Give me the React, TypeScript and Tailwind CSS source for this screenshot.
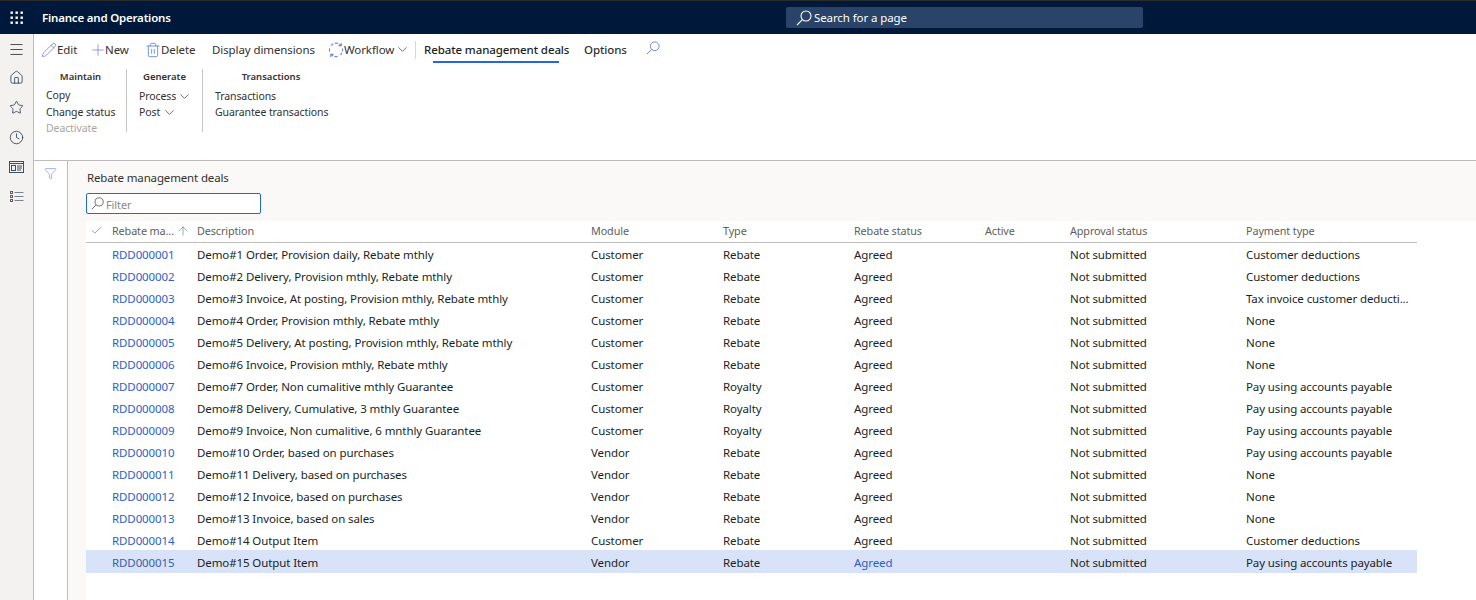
import React from "react";
import { Pencil, Plus, Trash2, ChevronDown, House, Star, Clock, Funnel, Menu, ArrowUp, Check } from "lucide-react";

const rows = [
  ["RDD000001", "Demo#1 Order, Provision daily, Rebate mthly", "Customer", "Rebate", "Customer deductions"],
  ["RDD000002", "Demo#2 Delivery, Provision mthly, Rebate mthly", "Customer", "Rebate", "Customer deductions"],
  ["RDD000003", "Demo#3 Invoice, At posting, Provision mthly, Rebate mthly", "Customer", "Rebate", "Tax invoice customer deducti..."],
  ["RDD000004", "Demo#4 Order, Provision mthly, Rebate mthly", "Customer", "Rebate", "None"],
  ["RDD000005", "Demo#5 Delivery, At posting, Provision mthly, Rebate mthly", "Customer", "Rebate", "None"],
  ["RDD000006", "Demo#6 Invoice, Provision mthly, Rebate mthly", "Customer", "Rebate", "None"],
  ["RDD000007", "Demo#7 Order, Non cumalitive mthly Guarantee", "Customer", "Royalty", "Pay using accounts payable"],
  ["RDD000008", "Demo#8 Delivery, Cumulative, 3 mthly Guarantee", "Customer", "Royalty", "Pay using accounts payable"],
  ["RDD000009", "Demo#9 Invoice, Non cumalitive, 6 mnthly Guarantee", "Customer", "Royalty", "Pay using accounts payable"],
  ["RDD000010", "Demo#10 Order, based on purchases", "Vendor", "Rebate", "Pay using accounts payable"],
  ["RDD000011", "Demo#11 Delivery, based on purchases", "Vendor", "Rebate", "None"],
  ["RDD000012", "Demo#12 Invoice, based on purchases", "Vendor", "Rebate", "None"],
  ["RDD000013", "Demo#13 Invoice, based on sales", "Vendor", "Rebate", "None"],
  ["RDD000014", "Demo#14 Output Item", "Customer", "Rebate", "Customer deductions"],
  ["RDD000015", "Demo#15 Output Item", "Vendor", "Rebate", "Pay using accounts payable"],
];

const cols = "grid grid-cols-[26px_85px_394px_132px_131px_131px_85px_176px_171px] w-[1331px]";

function Waffle() {
  return (
    <svg width="14" height="14" viewBox="0 0 14 14" fill="#fff">
      {[1, 6, 11].flatMap((y) => [1, 6, 11].map((x) => <rect key={`${x}-${y}`} x={x - 0.5} y={y - 0.5} width="2.4" height="2.4" />))}
    </svg>
  );
}

function Loupe({ size, color }: { size: number; color: string }) {
  return (
    <svg width={size} height={size} viewBox="0 0 16 16" fill="none" stroke={color} strokeWidth="1.1">
      <circle cx="10" cy="6" r="5" />
      <path d="M6.4 9.6L1 15" />
    </svg>
  );
}

function Workspace() {
  return (
    <svg width="15" height="12" viewBox="0 0 15 12" fill="none" stroke="#3f4f63" strokeWidth="1">
      <rect x="0.5" y="0.5" width="14" height="11" />
      <path d="M0.5 2.5H14.5" />
      <rect x="2.5" y="4.5" width="4" height="5" />
      <path d="M8 5H13M8 7H13M8 9H12" />
    </svg>
  );
}

function ListIcon() {
  return (
    <svg width="14" height="12" viewBox="0 0 14 12" fill="none" stroke="#6b5a5f" strokeWidth="1">
      <rect x="0.5" y="0.5" width="2" height="2" />
      <rect x="0.5" y="4.5" width="2" height="2" />
      <rect x="0.5" y="8.5" width="2" height="2" />
      <path d="M4.5 1.5H13.5M4.5 5.5H13.5M4.5 9.5H13.5" stroke="#7b838e" />
    </svg>
  );
}

function WorkflowIcon() {
  return (
    <svg width="16" height="16" viewBox="0 0 16 16" fill="none" stroke="#6f7fe0" strokeWidth="1.1">
      <path d="M3 3.5A6.5 6.5 0 0 1 13 3.5M14.4 6.5A6.5 6.5 0 0 1 12.5 12.8M9.5 14.4A6.5 6.5 0 0 1 3 12.5M1.6 9.5A6.5 6.5 0 0 1 1.8 6" strokeDasharray="3 1.4" />
      <path d="M10.5 3.6H13.2V1" />
      <path d="M5.5 12.4H2.8V15" />
    </svg>
  );
}

export default function App() {
  return (
    <div className="h-[600px] w-[1476px] overflow-hidden bg-white flex flex-col text-[11.5px] tracking-[-0.1px] leading-[16px] text-[#201f1e] font-['Noto_Sans',sans-serif]">
      <header className="h-[34px] shrink-0 bg-[#00183a] border-t border-[#2b2b2b] flex items-center relative">
        <div className="w-[33px] flex justify-center"><Waffle /></div>
        <span className="ml-[9px] text-white font-semibold tracking-[-0.2px]">Finance and Operations</span>
        <div className="absolute left-[786px] top-[6px] w-[357px] h-[21px] bg-[#2a4368] rounded-[2px] flex items-center pl-[10px] gap-[2px] text-white">
          <Loupe size={16} color="#ffffff" />
          <span className="pt-px">Search for a page</span>
        </div>
      </header>
      <div className="flex flex-1 min-h-0">
        <nav className="w-[34px] shrink-0 bg-[#f3f2f1] border-r border-[#bdbdbd] flex flex-col items-center pt-[2px] text-[#1f2d40]">
          <div className="h-[26px] flex items-center"><Menu size={17} strokeWidth={1.1} className="text-[#201f1e]" /></div>
          <div className="h-[30px] flex items-center"><House size={15} strokeWidth={1.2} /></div>
          <div className="h-[30px] flex items-center"><Star size={15} strokeWidth={1.2} /></div>
          <div className="h-[30px] flex items-center"><Clock size={15} strokeWidth={1.2} /></div>
          <div className="h-[30px] flex items-center"><Workspace /></div>
          <div className="h-[30px] flex items-center"><ListIcon /></div>
        </nav>
        <div className="flex-1 min-w-0 flex flex-col">
          <div className="h-[127px] shrink-0 border-b border-[#bdbdbd] bg-white">
            <div className="h-[31px] flex items-center pl-[7px] text-[#323130]">
              <div className="flex items-center w-[49px]"><Pencil size={16} strokeWidth={1.2} className="text-[#6f7fe0]" /><span>Edit</span></div>
              <div className="flex items-center w-[55px]"><Plus size={18} strokeWidth={1} className="text-[#6f7fe0] -ml-[1px] -mr-[2px]" /><span>New</span></div>
              <div className="flex items-center w-[67px]"><Trash2 size={16} strokeWidth={1.2} className="text-[#4a7fd0]" /><span>Delete</span></div>
              <span className="w-[116px]">Display dimensions</span>
              <div className="flex items-center w-[87px]"><WorkflowIcon /><span>Workflow</span><ChevronDown size={15} strokeWidth={1.1} className="ml-[1px]" /></div>
              <div className="w-px h-[18px] bg-[#d6d6d6]" />
              <div className="relative ml-[8px] w-[160px] font-medium text-[#201f1e]">
                Rebate management deals
                <div className="absolute left-[9px] top-[19px] w-[126px] h-[2px] bg-[#2266e3]" />
              </div>
              <span className="font-medium w-[62px]">Options</span>
              <div className="-mt-[4px]"><Loupe size={14} color="#6f7fe0" /></div>
            </div>
            <div className="flex pt-[4px] text-[#323130] text-[10.5px]">
              <div className="w-[92px] pl-[12px] h-[64px]">
                <div className="font-semibold text-[9.5px] tracking-normal text-center pr-[11px] pt-px h-[18px] leading-[14px]">Maintain</div>
                <div className="h-[17px]">Copy</div>
                <div className="h-[16px]">Change status</div>
                <div className="h-[16px] text-[#a6a6a6]">Deactivate</div>
              </div>
              <div className="w-px h-[63px] bg-[#c8c6c4]" />
              <div className="w-[75px] pl-[12px]">
                <div className="font-semibold text-[9.5px] tracking-normal text-center pr-[12px] pt-px h-[19px] leading-[14px]">Generate</div>
                <div className="h-[16px] flex items-center">Process<ChevronDown size={15} strokeWidth={1.1} className="ml-[1px]" /></div>
                <div className="h-[16px] flex items-center">Post<ChevronDown size={15} strokeWidth={1.1} className="ml-[2px]" /></div>
              </div>
              <div className="w-px h-[63px] bg-[#c8c6c4]" />
              <div className="pl-[12px]">
                <div className="font-semibold text-[9.5px] tracking-normal text-center pt-px h-[19px] w-[112px] leading-[14px]">Transactions</div>
                <div className="h-[16px]">Transactions</div>
                <div className="h-[16px]">Guarantee transactions</div>
              </div>
            </div>
          </div>
          <div className="flex-1 min-h-0 flex">
            <div className="w-[34px] shrink-0 border-r border-[#bdbdbd] flex justify-center pt-[6px]">
              <Funnel size={13} strokeWidth={1.1} className="text-[#6f7fe0]" />
            </div>
            <div className="flex-1 min-w-0 bg-[#faf9f8] pl-[18px] flex flex-col">
              <div className="h-[60px] shrink-0 pt-[9px]">
                <div className="h-[16px] pl-px text-[#323130] tracking-[-0.15px]">Rebate management deals</div>
                <div className="mt-[7px] w-[175px] h-[21px] bg-white border border-[#2266e3] rounded-[2px] flex items-center pl-[4px] text-[#8a8886] text-[11px]">
                  <Loupe size={13} color="#605e5c" />
                  <span className="ml-[2px] pt-[2px]">Filter</span>
                </div>
              </div>
              <div className="flex-1 bg-white">
                <div className={`${cols} h-[22px] pb-[2px] border-b border-[#bdbdbd] items-center whitespace-nowrap text-[#605e5c] text-[10.8px]`}>
                  <div className="pl-[4px]"><Check size={13} strokeWidth={1.1} /></div>
                  <div className="flex items-center">Rebate ma...<ArrowUp size={14} strokeWidth={1} className="ml-[2px] text-[#4f6f8f]" /></div>
                  <div>Description</div>
                  <div>Module</div>
                  <div>Type</div>
                  <div>Rebate status</div>
                  <div>Active</div>
                  <div>Approval status</div>
                  <div>Payment type</div>
                </div>
                {rows.map((r, i) => {
                  const sel = i === rows.length - 1;
                  return (
                    <div key={r[0]} className={`${cols} items-center ${sel ? "h-[23px] -mt-px pt-[3px] bg-[#d8e3fa]" : "h-[22px] pt-[2px]"} whitespace-nowrap`}>
                      <div />
                      <div className={sel ? "text-[#3b5fa8]" : "text-[#2b5fc9]"}>{r[0]}</div>
                      <div>{r[1]}</div>
                      <div>{r[2]}</div>
                      <div>{r[3]}</div>
                      <div className={sel ? "text-[#2b5fc9]" : ""}>Agreed</div>
                      <div />
                      <div>Not submitted</div>
                      <div>{r[4]}</div>
                    </div>
                  );
                })}
              </div>
            </div>
          </div>
        </div>
      </div>
    </div>
  );
}
